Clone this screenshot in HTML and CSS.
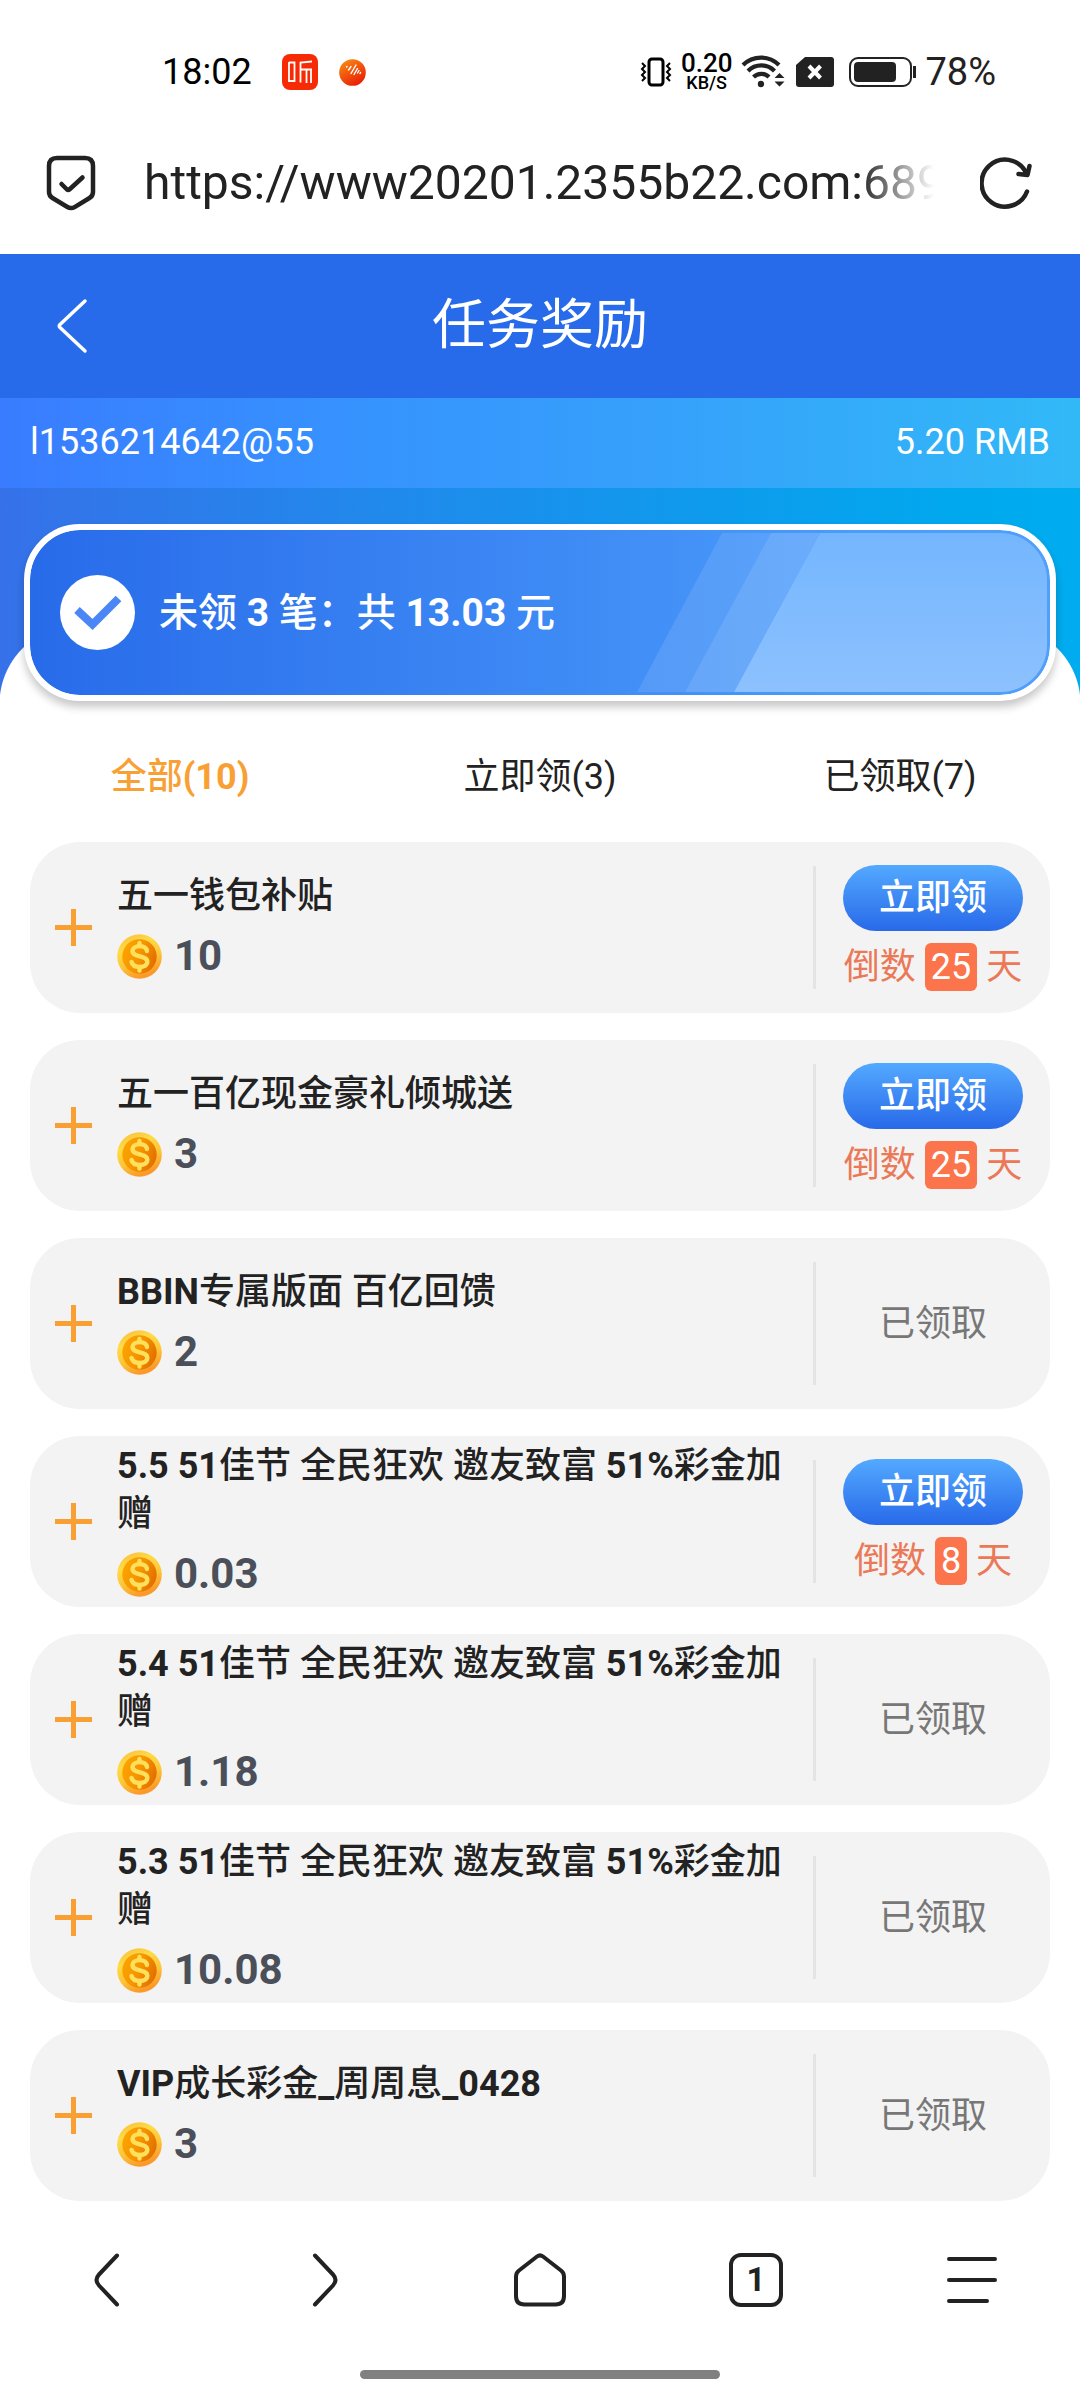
FILE: index.html
```html
<!DOCTYPE html>
<html lang="zh-CN">
<head>
<meta charset="utf-8">
<meta name="viewport" content="width=device-width, initial-scale=1">
<title>任务奖励</title>
<link rel="stylesheet" href="styles.css">
</head>
<body>
<svg class="defs" width="0" height="0" aria-hidden="true">
  <defs>
    <linearGradient id="rim" x1="0" y1="0" x2="0.4" y2="1"><stop offset="0" stop-color="#f9b93a"/><stop offset="0.35" stop-color="#ffdb45"/><stop offset="0.7" stop-color="#fdc437"/><stop offset="1" stop-color="#fb9a2b"/></linearGradient>
    <linearGradient id="face" x1="0" y1="0.3" x2="1" y2="0.7"><stop offset="0" stop-color="#fba400"/><stop offset="0.5" stop-color="#f59300"/><stop offset="1" stop-color="#e06c00"/></linearGradient>
    <linearGradient id="ball" x1="0.2" y1="0" x2="0.8" y2="1"><stop offset="0" stop-color="#f78a12"/><stop offset="1" stop-color="#ea1606"/></linearGradient>
    <symbol id="coin" viewBox="0 0 45 45">
      <circle cx="22.5" cy="22.5" r="22.3" fill="url(#rim)"/>
      <circle cx="22.5" cy="22.5" r="17.2" fill="url(#face)"/>
      <path d="M30 17c-.6-3.200-3.400-4.900-7.300-4.900-4.300 0-7.200 2-7.200 5 0 6.900 14.800 3.700 14.800 10.700 0 3.200-3.200 5.200-7.700 5.200-4.300 0-7.300-1.900-8.100-5.100" fill="none" stroke="#ffe05a" stroke-width="4.400" stroke-linecap="round"/>
      <path d="M22.500 9v3M22.500 33v3.500" stroke="#ffe05a" stroke-width="4.400" stroke-linecap="round"/>
    </symbol>
    <symbol id="plus" viewBox="0 0 37 37"><path d="M0 18.500h37M18.500 0v37" stroke="#f9a035" stroke-width="5"/></symbol>
  </defs>
</svg>

<div class="status">
  <div class="status-side">
    <span class="clock">18:02</span>
    <svg class="app-icon" width="36" height="36" viewBox="0 0 36 36" aria-hidden="true"><rect width="36" height="36" rx="8" fill="#f62a05"/><path d="M7 8v20M7 8.500h5.500v18.500H7M18.500 28.500V8.500L30 7.500M18.500 15.500H30M24.500 15.500V29M29 15.500v13.500" fill="none" stroke="#fff" stroke-width="1.800"/></svg>
    <svg class="ball-icon" width="27" height="27" viewBox="0 0 27 27" aria-hidden="true"><circle cx="13.500" cy="13.500" r="13.300" fill="url(#ball)"/><path d="M7.500 8l.5-.5M9.500 11l2.500-3.500M12 14.500l5-8.500M15 15.500l3.500-6M18.500 14l1.500-2.500M21 14.500l.5-1" stroke="#fff" stroke-width="1.400" stroke-linecap="round"/></svg>
  </div>
  <div class="status-side status-right">
    <svg width="32" height="30" viewBox="0 0 32 30" aria-hidden="true"><rect x="9" y="2" width="14" height="26" rx="3" fill="none" stroke="#000" stroke-width="3"/><path d="M2 6l3 3-3 3 3 3-3 3 3 3-3 3M30 6l-3 3 3 3-3 3 3 3-3 3 3 3" fill="none" stroke="#000" stroke-width="2"/></svg>
    <span class="speed"><span class="speed-num">0.20</span><span class="speed-unit">KB/S</span></span>
    <svg width="46" height="36" viewBox="0 0 46 36" aria-hidden="true"><g fill="none" stroke="#222" stroke-width="4.200"><path d="M2 11a25.500 25.500 0 0 1 36 0"/><path d="M7 17a18.500 18.500 0 0 1 26.500 0"/><path d="M12.500 23a11 11 0 0 1 15.500 0"/></g><circle cx="20" cy="30" r="3.200" fill="#222"/><path d="M33.500 24l5-5 5 5zM33.500 27.500l5 5 5-5z" fill="#222"/></svg>
    <svg width="38" height="30" viewBox="0 0 38 30" aria-hidden="true"><path d="M9 0h26a3 3 0 0 1 3 3v24a3 3 0 0 1-3 3H3a3 3 0 0 1-3-3V8z" fill="#222"/><path d="M13 9l11.500 12M24.500 9L13 21" stroke="#fff" stroke-width="4"/></svg>
    <svg class="battery" width="67" height="30" viewBox="0 0 67 30" aria-hidden="true"><rect x="1" y="1" width="61" height="28" rx="8" fill="none" stroke="#222" stroke-width="2"/><rect x="5" y="5" width="42" height="20" rx="4" fill="#222"/><path d="M65.500 9v12" stroke="#222" stroke-width="3"/></svg>
    <span class="percent">78%</span>
  </div>
</div>

<div class="address">
  <svg width="50" height="56" viewBox="0 0 50 56" fill="none" stroke="#222" stroke-width="4.500" stroke-linecap="round" stroke-linejoin="round" aria-hidden="true"><path d="M11 3h28q8 0 8 8v26q0 4-3.500 6L29 51.800q-4 2.400-8 0L6.500 43Q3 41 3 37V11q0-8 8-8z"/><path d="M15.500 29l5.500 5.500q1.200 1 2.400 0L36.500 22.500"/></svg>
  <span class="url">https://www20201.2355b22.com:689</span>
  <button class="bare" type="button" aria-label="刷新"><svg width="52" height="52" viewBox="0 0 52 52" fill="none" stroke="#222" stroke-width="4.500" stroke-linecap="round" stroke-linejoin="round"><path d="M47 34.500A23.500 23.500 0 1 1 45.500 14.500L47.500 17.500M49.500 9l-2 9-9-1"/></svg></button>
</div>

<header class="title-bar">
  <button class="bare" type="button" aria-label="返回"><svg width="32" height="56" viewBox="0 0 32 56" fill="none" stroke="#fff" stroke-width="3.500" stroke-linecap="round" stroke-linejoin="round"><path d="M29 3L4 26.500q-1.500 1.500 0 3L29 53"/></svg></button>
  <h1>任务奖励</h1>
</header>
<div class="account"><span>l1536214642@55</span><span>5.20 RMB</span></div>

<main>
  <section class="hero">
    <div class="summary">
      <svg class="shine" viewBox="0 0 410 159" preserveAspectRatio="none" aria-hidden="true">
        <defs><linearGradient id="shine" x1="0" y1="0" x2="0" y2="1"><stop offset="0" stop-color="#74b6fe"/><stop offset="1" stop-color="#8dc1fe"/></linearGradient></defs>
        <path d="M85 0h49L48 159H0z" fill="#fff" fill-opacity="0.100"/><path d="M134 0h49L97 159H48z" fill="#fff" fill-opacity="0.190"/><path d="M183 0h227v159H97z" fill="url(#shine)"/>
      </svg>
      <svg class="tick" width="75" height="75" viewBox="0 0 75 75" aria-hidden="true"><circle cx="37.500" cy="37.500" r="37.500" fill="#fff"/><path d="M17 35l15.500 14.500L58.500 23.500" fill="none" stroke="#4a86f5" stroke-width="8"/></svg>
      <p>未领 <b>3</b> 笔：共 <b>13.03</b> 元</p>
    </div>
  </section>

  <nav class="tabs">
    <button class="tab active" type="button">全部<b>(10)</b></button>
    <button class="tab" type="button">立即领(3)</button>
    <button class="tab" type="button">已领取(7)</button>
  </nav>

  <ul class="list">
    <li class="item"><svg class="plus"><use href="#plus"/></svg><div class="info"><h2>五一钱包补贴</h2><p class="amount"><svg class="coin"><use href="#coin"/></svg>10</p></div><div class="state"><button class="claim" type="button">立即领</button><p class="left">倒数 <span class="days">25</span> 天</p></div></li>
    <li class="item"><svg class="plus"><use href="#plus"/></svg><div class="info"><h2>五一百亿现金豪礼倾城送</h2><p class="amount"><svg class="coin"><use href="#coin"/></svg>3</p></div><div class="state"><button class="claim" type="button">立即领</button><p class="left">倒数 <span class="days">25</span> 天</p></div></li>
    <li class="item"><svg class="plus"><use href="#plus"/></svg><div class="info"><h2><b>BBIN</b>专属版面 百亿回馈</h2><p class="amount"><svg class="coin"><use href="#coin"/></svg>2</p></div><div class="state">已领取</div></li>
    <li class="item"><svg class="plus"><use href="#plus"/></svg><div class="info"><h2><b>5.5 51</b>佳节 全民狂欢 邀友致富 <b>51%</b>彩金加赠</h2><p class="amount"><svg class="coin"><use href="#coin"/></svg>0.03</p></div><div class="state"><button class="claim" type="button">立即领</button><p class="left">倒数 <span class="days">8</span> 天</p></div></li>
    <li class="item"><svg class="plus"><use href="#plus"/></svg><div class="info"><h2><b>5.4 51</b>佳节 全民狂欢 邀友致富 <b>51%</b>彩金加赠</h2><p class="amount"><svg class="coin"><use href="#coin"/></svg>1.18</p></div><div class="state">已领取</div></li>
    <li class="item"><svg class="plus"><use href="#plus"/></svg><div class="info"><h2><b>5.3 51</b>佳节 全民狂欢 邀友致富 <b>51%</b>彩金加赠</h2><p class="amount"><svg class="coin"><use href="#coin"/></svg>10.08</p></div><div class="state">已领取</div></li>
    <li class="item"><svg class="plus"><use href="#plus"/></svg><div class="info"><h2><b>VIP</b>成长彩金<b>_</b>周周息<b>_0428</b></h2><p class="amount"><svg class="coin"><use href="#coin"/></svg>3</p></div><div class="state">已领取</div></li>
  </ul>
</main>

<footer>
  <nav class="tools">
    <button class="bare" type="button" aria-label="后退"><svg viewBox="0 0 54 54"><path d="M36 2.500L18 21.500q-5 5.500 0 11L36 51.500"/></svg></button>
    <button class="bare" type="button" aria-label="前进"><svg viewBox="0 0 54 54"><path d="M18 2.500L36 21.500q5 5.500 0 11L18 51.500"/></svg></button>
    <button class="bare" type="button" aria-label="主页"><svg viewBox="0 0 54 54"><path d="M24 3.500q3-2.300 6 0L48 17.500q3 2.300 3 6V43q0 8.500-8.500 8.500h-31Q3 51.500 3 43V23.500q0-3.700 3-6z"/></svg></button>
    <button class="bare pages" type="button" aria-label="标签页"><span>1</span></button>
    <button class="bare" type="button" aria-label="菜单"><svg viewBox="0 0 54 54"><path d="M4 6h46M4 27h46M4 48h38"/></svg></button>
  </nav>
  <div class="home-line"></div>
</footer>
</body>
</html>
```
FILE: styles.css
```css
* { box-sizing: border-box; margin: 0; padding: 0; }
body {
  background: #fff;
  color: #222;
  font-family: Roboto, "Noto Sans CJK SC", sans-serif;
  font-size: 36px;
  line-height: 48px;
}
button { font: inherit; color: inherit; border: 0; background: none; }
b { font-weight: 700; }
svg { display: block; flex: none; }
.defs { position: absolute; }
.bare { display: flex; align-items: center; justify-content: center; }

.status {
  display: flex;
  align-items: center;
  justify-content: space-between;
  height: 144px;
  padding: 0 84px 0 162px;
}
.status-side { display: flex; align-items: center; }
.status-right { gap: 9px; }
.clock { color: #000; }
.app-icon { margin-left: 30px; }
.ball-icon { margin-left: 21px; }
.speed { display: flex; flex-direction: column; align-items: center; color: #000; font-weight: 500; }
.speed-num { font-size: 26px; line-height: 22px; }
.speed-unit { font-size: 18px; line-height: 18px; }
.battery { margin-left: 6px; }
.percent { font-size: 38px; }

.address {
  display: flex;
  align-items: center;
  height: 110px;
  padding: 0 48px 32px 46px;
}
.url {
  flex: 1;
  min-width: 0;
  overflow: hidden;
  white-space: nowrap;
  margin: 0 46px 0 48px;
  font-size: 48px;
  line-height: 64px;
  -webkit-mask-image: linear-gradient(to left, transparent, #000 75px);
  mask-image: linear-gradient(to left, transparent, #000 75px);
}

.title-bar {
  display: grid;
  grid-template-columns: 32px 1fr 32px;
  align-items: center;
  height: 144px;
  padding: 0 56px;
  background: #286bea;
  color: #fff;
}
h1 { font-size: 54px; line-height: 72px; font-weight: 400; text-align: center; }
.account {
  display: flex;
  align-items: center;
  justify-content: space-between;
  height: 90px;
  padding: 0 30px 2px;
  background: linear-gradient(to right, #397cff, #3694fe 35%, #36a0fb 60%, #31b9f7);
  color: #fff;
}

.hero {
  padding: 36px 24px 3px;
  background:
    radial-gradient(circle at 78px 78px, #fff 78px, transparent 79px) left bottom / 78px 78px no-repeat,
    radial-gradient(circle at 0 78px, #fff 78px, transparent 79px) right bottom / 78px 78px no-repeat,
    linear-gradient(#fff, #fff) center bottom / calc(100% - 154px) 40px no-repeat,
    linear-gradient(to right, #3671e9, #1f8bec 38%, #00a9ee 90%, #00acef);
}
.summary {
  position: relative;
  display: flex;
  align-items: center;
  gap: 24px;
  height: 177px;
  padding: 0 30px;
  border: 6px solid #fff;
  border-radius: 56px;
  background: linear-gradient(to right, #286bea, #4a9bfb 80%, #509ffb) padding-box, #fff;
  box-shadow: 0 6px 9px rgba(0, 0, 0, 0.22);
  color: #fff;
  font-size: 39px;
  font-weight: 500;
}
.shine { position: absolute; top: 3px; right: 3px; width: 410px; height: 159px; border-radius: 0 47px 47px 0; }

.tabs { display: grid; grid-template-columns: repeat(3, 1fr); padding: 43px 0 35px; }
.tab { height: 60px; text-align: center; }
.active { color: #f9a035; font-weight: 500; }

.list { display: grid; gap: 27px; padding: 0 30px; list-style: none; }
.item {
  display: grid;
  grid-template-columns: 87px 1fr 237px;
  align-items: center;
  min-height: 171px;
  border-radius: 50px;
  background: #f3f3f3;
}
.plus { width: 37px; height: 37px; justify-self: center; }
.info { padding: 5px 16px 3px 0; }
h2 { font-size: 36px; line-height: 48px; font-weight: 500; }
.amount {
  display: flex;
  align-items: center;
  gap: 12px;
  height: 58px;
  margin-top: 7px;
  color: #4a4f59;
  font-size: 42px;
  font-weight: 700;
}
.coin { width: 45px; height: 45px; }
.state {
  display: flex;
  flex-direction: column;
  align-items: center;
  justify-content: center;
  gap: 12px;
  height: 123px;
  border-left: 3px solid #e4e4e4;
  color: #777;
}
.claim {
  flex: none;
  width: 180px;
  height: 66px;
  border-radius: 33px;
  background: linear-gradient(#53a9ff, #2869e9);
  color: #fff;
  font-weight: 500;
}
.left { flex: none; height: 48px; color: #eb7856; }
.days {
  display: inline-block;
  padding: 0 6px;
  border-radius: 6px;
  background: #fc744c;
  color: #fff;
}

footer { padding: 43px 0 21px; }
.tools { display: grid; grid-template-columns: repeat(5, 1fr); }
.tools button { height: 72px; }
.tools svg { width: 54px; height: 54px; fill: none; stroke: #222; stroke-width: 4px; stroke-linecap: round; stroke-linejoin: round; }
.pages span {
  width: 54px;
  border: 4px solid #222;
  border-radius: 12px;
  font-size: 33px;
  line-height: 46px;
  font-weight: 700;
}
.home-line { width: calc(100% / 3); height: 9px; margin: 54px auto 0; border-radius: 5px; background: #808080; }
```
